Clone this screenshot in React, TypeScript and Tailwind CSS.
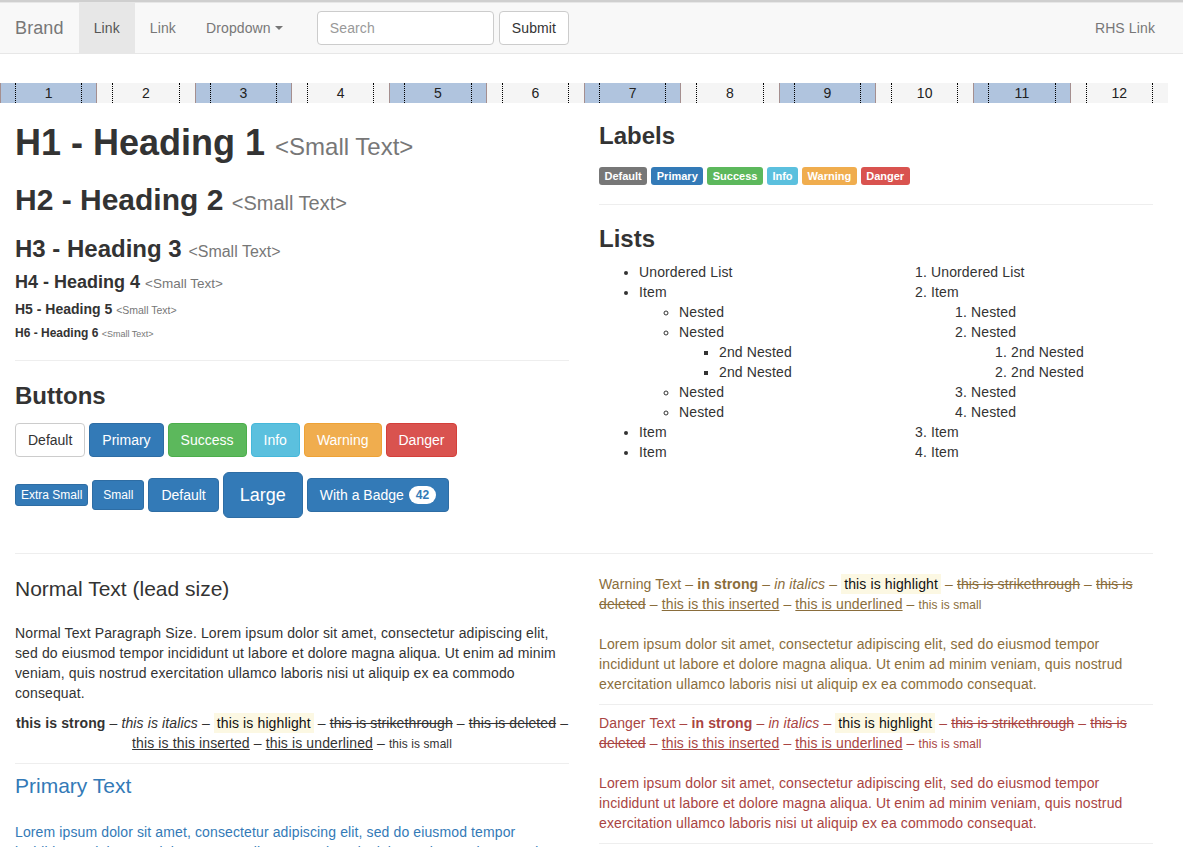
import React from "react";

const lorem =
  "Lorem ipsum dolor sit amet, consectetur adipiscing elit, sed do eiusmod tempor incididunt ut labore et dolore magna aliqua. Ut enim ad minim veniam, quis nostrud exercitation ullamco laboris nisi ut aliquip ex ea commodo consequat.";

const Caret = () => (
  <span className="inline-block w-0 h-0 ml-[4px] align-middle border-x-[4px] border-x-transparent border-t-[4px] border-t-current" />
);

const Navbar = () => (
  <div className="border-t-2 border-[#cfcfcf]">
    <nav className="h-[52px] bg-[#f8f8f8] border-y border-[#e7e7e7] flex items-stretch pr-[13px] text-[14px] text-[#777]">
      <a className="px-[15px] flex items-center text-[18px]">Brand</a>
      <a className="px-[15px] flex items-center bg-[#e7e7e7] text-[#555]">Link</a>
      <a className="px-[15px] flex items-center">Link</a>
      <a className="px-[15px] flex items-center">
        Dropdown
        <Caret />
      </a>
      <form className="flex items-start gap-[5px] pl-[19px] pt-[8px]">
        <input
          placeholder="Search"
          className="w-[177px] h-[34px] px-[12px] border border-[#ccc] rounded-[4px] bg-white text-[14px] placeholder:text-[#999] outline-none"
        />
        <button
          type="button"
          className="h-[34px] px-[12px] border border-[#ccc] rounded-[4px] bg-white text-[#333]"
        >
          Submit
        </button>
      </form>
      <a className="ml-auto px-[15px] flex items-center">RHS Link</a>
    </nav>
  </div>
);

const GridRow = () => (
  <div className="grid grid-cols-12 w-[1168px] mt-[29px] text-[14px] leading-[20px] text-[#222]">
    {Array.from({ length: 12 }).map((_, i) =>
      i % 2 === 0 ? (
        <div key={i} className="bg-[#b0c4de] border-x border-[#a58f8f]">
          <div className="mx-[14px] border-x border-dotted border-black text-center">
            {i + 1}
          </div>
        </div>
      ) : (
        <div key={i} className="bg-[#f5f5f5]">
          <div className="mx-[15px] border-x border-dotted border-black text-center">
            {i + 1}
          </div>
        </div>
      )
    )}
  </div>
);

const btnColors: Record<string, string> = {
  default: "bg-white border-[#ccc] text-[#333]",
  primary: "bg-[#337ab7] border-[#2e6da4] text-white",
  success: "bg-[#5cb85c] border-[#4cae4c] text-white",
  info: "bg-[#5bc0de] border-[#46b8da] text-white",
  warning: "bg-[#f0ad4e] border-[#eea236] text-white",
  danger: "bg-[#d9534f] border-[#d43f3a] text-white",
};

const Btn = ({
  kind,
  size = "md",
  children,
}: {
  kind: string;
  size?: "xs" | "sm" | "md" | "lg";
  children: React.ReactNode;
}) => {
  const sizes = {
    xs: "px-[5px] py-[1px] text-[12px] leading-[18px] rounded-[3px]",
    sm: "px-[10px] py-[5px] text-[12px] leading-[18px] rounded-[3px]",
    md: "px-[12px] py-[6px] text-[14px] leading-[20px] rounded-[4px]",
    lg: "px-[16px] py-[10px] text-[18px] leading-[24px] rounded-[6px]",
  };
  return (
    <button
      type="button"
      className={`border inline-flex items-center tracking-normal ${btnColors[kind]} ${sizes[size]}`}
    >
      {children}
    </button>
  );
};

const labelColors = [
  ["Default", "bg-[#777]"],
  ["Primary", "bg-[#337ab7]"],
  ["Success", "bg-[#5cb85c]"],
  ["Info", "bg-[#5bc0de]"],
  ["Warning", "bg-[#f0ad4e]"],
  ["Danger", "bg-[#d9534f]"],
];

const Hr = ({ className = "" }: { className?: string }) => (
  <div className={`border-t border-[#eee] ${className}`} />
);

const Small = ({ pct, children }: { pct: string; children: React.ReactNode }) => (
  <small className={`font-normal leading-none text-[#777] ${pct}`}>{children}</small>
);

const Mark = ({ children }: { children: React.ReactNode }) => (
  <mark className="bg-[#fcf8e3] text-[#111] px-[3px] py-[2px]">{children}</mark>
);

const Inline = ({ first }: { first: React.ReactNode }) => (
  <>
    {first} – <Mark>this is highlight</Mark> – <s>this is strikethrough</s> –{" "}
    <del>this is deleted</del> – <ins className="underline">this is this inserted</ins> –{" "}
    <u>this is underlined</u> – <small className="text-[85%] leading-none">this is small</small>
  </>
);

export default function App() {
  return (
    <div className="min-h-screen bg-white font-['Liberation_Sans',Arial,sans-serif] text-[14px] leading-[20px] tracking-[0.12px] text-[#333]">
      <Navbar />
      <GridRow />
      <div className="w-[1168px] px-[15px]">
        <div className="flex -mx-[15px]">
          {/* Headings & buttons */}
          <div className="w-1/2 px-[15px] flex flex-col">
            <h1 className="mt-[20px] text-[36px] leading-[40px] font-bold tracking-normal">
              H1 - Heading 1 <Small pct="text-[24px]">&lt;Small Text&gt;</Small>
            </h1>
            <h2 className="mt-[20px] text-[30px] leading-[33px] font-bold tracking-normal">
              H2 - Heading 2 <Small pct="text-[20px]">&lt;Small Text&gt;</Small>
            </h2>
            <h3 className="mt-[20px] text-[24px] leading-[26px] font-bold tracking-normal">
              H3 - Heading 3 <Small pct="text-[16px]">&lt;Small Text&gt;</Small>
            </h3>
            <h4 className="mt-[10px] text-[18px] leading-[20px] font-bold tracking-normal">
              H4 - Heading 4 <Small pct="text-[13.5px]">&lt;Small Text&gt;</Small>
            </h4>
            <h5 className="mt-[10px] text-[14px] leading-[15px] font-bold tracking-normal">
              H5 - Heading 5 <Small pct="text-[10.5px]">&lt;Small Text&gt;</Small>
            </h5>
            <h6 className="mt-[10px] text-[12px] leading-[13px] font-bold tracking-normal">
              H6 - Heading 6 <Small pct="text-[9px]">&lt;Small Text&gt;</Small>
            </h6>
            <Hr className="mt-[20px]" />
            <h3 className="mt-[22px] text-[24px] leading-[26px] font-bold tracking-normal">Buttons</h3>
            <div className="mt-[14px] flex gap-[4px]">
              <Btn kind="default">Default</Btn>
              <Btn kind="primary">Primary</Btn>
              <Btn kind="success">Success</Btn>
              <Btn kind="info">Info</Btn>
              <Btn kind="warning">Warning</Btn>
              <Btn kind="danger">Danger</Btn>
            </div>
            <div className="mt-[15px] flex items-center gap-[4px] h-[46px]">
              <Btn kind="primary" size="xs">Extra Small</Btn>
              <Btn kind="primary" size="sm">Small</Btn>
              <Btn kind="primary">Default</Btn>
              <Btn kind="primary" size="lg">Large</Btn>
              <Btn kind="primary">
                With a Badge
                <span className="ml-[5px] bg-white text-[#337ab7] text-[12px] font-bold leading-[12px] px-[7px] py-[3px] rounded-[10px]">
                  42
                </span>
              </Btn>
            </div>
          </div>

          {/* Labels & lists */}
          <div className="w-1/2 px-[15px] flex flex-col">
            <h3 className="mt-[20px] text-[24px] leading-[26px] font-bold tracking-normal">Labels</h3>
            <div className="mt-[18px] flex gap-[4px]">
              {labelColors.map(([t, c]) => (
                <span
                  key={t}
                  className={`${c} h-[18px] px-[5.5px] flex items-center rounded-[3px] text-white text-[11px] font-bold tracking-normal`}
                >
                  {t}
                </span>
              ))}
            </div>
            <Hr className="mt-[19px]" />
            <h3 className="mt-[21px] text-[24px] leading-[26px] font-bold tracking-normal">Lists</h3>
            <div className="mt-[10px] flex -mx-[15px]">
              <div className="w-1/2 px-[15px]">
                <ul className="list-disc pl-[40px]">
                  <li>Unordered List</li>
                  <li>
                    Item
                    <ul className="list-[circle] pl-[40px]">
                      <li>Nested</li>
                      <li>
                        Nested
                        <ul className="list-[square] pl-[40px]">
                          <li>2nd Nested</li>
                          <li>2nd Nested</li>
                        </ul>
                      </li>
                      <li>Nested</li>
                      <li>Nested</li>
                    </ul>
                  </li>
                  <li>Item</li>
                  <li>Item</li>
                </ul>
              </div>
              <div className="w-1/2 px-[15px]">
                <ol className="list-decimal pl-[40px]">
                  <li>Unordered List</li>
                  <li>
                    Item
                    <ol className="list-decimal pl-[40px]">
                      <li>Nested</li>
                      <li>
                        Nested
                        <ol className="list-decimal pl-[40px]">
                          <li>2nd Nested</li>
                          <li>2nd Nested</li>
                        </ol>
                      </li>
                      <li>Nested</li>
                      <li>Nested</li>
                    </ol>
                  </li>
                  <li>Item</li>
                  <li>Item</li>
                </ol>
              </div>
            </div>
          </div>
        </div>

        <Hr className="mt-[35px]" />

        <div className="flex -mx-[15px]">
          {/* Normal & primary text */}
          <div className="w-1/2 px-[15px] flex flex-col">
            <p className="mt-[20px] text-[21px] leading-[29px] font-light tracking-normal">
              Normal Text (lead size)
            </p>
            <p className="mt-[20px]">Normal Text Paragraph Size. {lorem}</p>
            <p className="mt-[10px] text-center">
              <Inline
                first={
                  <>
                    <strong>this is strong</strong> – <em>this is italics</em>
                  </>
                }
              />
            </p>
            <Hr className="mt-[10px]" />
            <p className="mt-[7px] text-[21px] leading-[29px] font-light tracking-normal text-[#337ab7]">
              Primary Text
            </p>
            <p className="mt-[22px] text-[#337ab7]">{lorem}</p>
          </div>

          {/* Warning & danger text */}
          <div className="w-1/2 px-[15px] flex flex-col">
            <p className="mt-[20px] text-[#8a6d3b]">
              <Inline
                first={
                  <>
                    Warning Text – <strong>in strong</strong> – <em>in italics</em>
                  </>
                }
              />
            </p>
            <p className="mt-[20px] text-[#8a6d3b]">{lorem}</p>
            <Hr className="mt-[10px]" />
            <p className="mt-[8px] text-[#a94442]">
              <Inline
                first={
                  <>
                    Danger Text – <strong>in strong</strong> – <em>in italics</em>
                  </>
                }
              />
            </p>
            <p className="mt-[20px] text-[#a94442]">{lorem}</p>
            <Hr className="mt-[10px]" />
          </div>
        </div>
      </div>
    </div>
  );
}
